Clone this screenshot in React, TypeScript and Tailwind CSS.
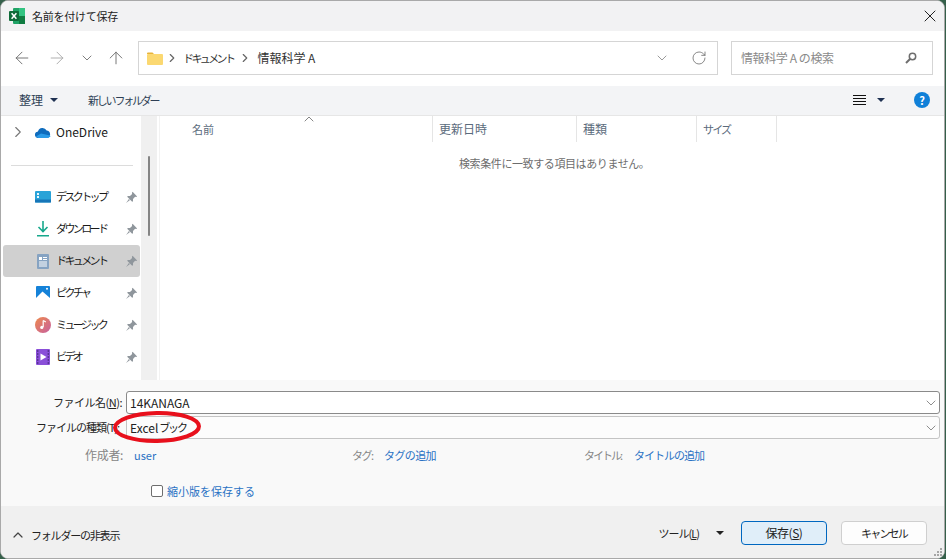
import { ArrowLeft, ArrowRight, ArrowUp, ChevronDown, ChevronRight, ChevronUp, RotateCw, X } from "lucide-react";

const font = { fontFamily: '"Noto Sans CJK JP", "Liberation Sans", sans-serif' };

function Pin() {
    return (
        <svg width="13" height="13" viewBox="0 0 12 12" className="shrink-0">
            <path d="M7 .8 11.2 5 10.3 5.6 9.3 5.4 7.4 7.4 7.4 9.4 6.6 10 2 5.4 2.6 4.6 4.6 4.6 6.6 2.7 6.4 1.7Z" fill="#8f969c" />
            <path d="M3.6 7.4 1 11 4.6 8.4Z" fill="#8f969c" />
        </svg>
    );
}

function DesktopIcon() {
    return (
        <svg width="16" height="12" viewBox="0 0 16 12">
            <rect width="16" height="11.5" rx="1" fill="#29a3d8" />
            <rect y="8.5" width="16" height="3" fill="#1676b8" />
            <rect x="2" y="2" width="2" height="2" fill="#e8f6fc" />
            <rect x="2" y="5" width="2" height="2" fill="#e8f6fc" />
        </svg>
    );
}

function DownloadIcon() {
    return (
        <svg width="14" height="16" viewBox="0 0 14 16" fill="none" stroke="#17a88c" strokeWidth="1.6">
            <path d="M7 0v10M2.5 6 7 10.5 11.5 6" />
            <path d="M1 14.8h12" />
        </svg>
    );
}

function DocIcon() {
    return (
        <svg width="12" height="15" viewBox="0 0 12 15">
            <rect width="12" height="15" rx="1" fill="#86a3c2" />
            <rect x="2" y="3" width="3" height="3" fill="#fff" />
            <path d="M6 3.5h4M6 5.5h4M2 8h8M2 10h8M2 12h8" stroke="#fff" strokeWidth="1" />
        </svg>
    );
}

function PictureIcon() {
    return (
        <svg width="14" height="14" viewBox="0 0 14 14">
            <rect width="14" height="14" rx="1" fill="#1582d8" />
            <path d="M0 12 6.5 5.5 14 12V14H0Z" fill="#fff" />
            <circle cx="11" cy="2.8" r="1" fill="#fff" />
        </svg>
    );
}

function MusicIcon() {
    return (
        <svg width="16" height="16" viewBox="0 0 16 16">
            <defs>
                <linearGradient id="mus" x1="0" y1="0" x2="1" y2="1">
                    <stop offset="0" stopColor="#ee8a4c" />
                    <stop offset="1" stopColor="#c760a0" />
                </linearGradient>
            </defs>
            <circle cx="8" cy="8" r="8" fill="url(#mus)" />
            <path d="M8.2 3.5V10" stroke="#fff" strokeWidth="1.2" />
            <path d="M8.2 3.5 10.8 5" stroke="#fff" strokeWidth="1.2" />
            <circle cx="6.8" cy="10.4" r="1.6" fill="#fff" />
        </svg>
    );
}

function VideoIcon() {
    return (
        <svg width="14" height="16" viewBox="0 0 14 16">
            <rect width="14" height="16" rx="1" fill="#8a4fd8" />
            <path d="M4.5 4.5 10.5 8 4.5 11.5Z" fill="#fff" />
            <path d="M1 2h1.4M1 5h1.4M1 8h1.4M1 11h1.4M1 14h1.4M11.6 2H13M11.6 5H13M11.6 8H13M11.6 11H13M11.6 14H13" stroke="#2b1a55" strokeWidth="1.2" />
        </svg>
    );
}

function SideItem({ icon, label, active }: { icon: React.ReactNode; label: string; active?: boolean }) {
    return (
        <div className={`flex h-[32px] items-center rounded-[3px] pl-[30px] pr-[2px] ${active ? "bg-[#d0d0d0]" : ""}`}>
            <span className="flex w-[20px] justify-center">{icon}</span>
            <span className="mb-[1px] ml-[3px] flex-1 whitespace-nowrap text-[11px] tracking-[-2.6px] text-[#1a1a1a]">{label}</span>
            <Pin />
        </div>
    );
}

function Col({ label, className }: { label: string; className: string }) {
    return (
        <div className={`flex h-[26px] items-center border-r border-[#e5e5e5] pl-[6px] text-[#5b6b7c] ${className}`}>
            {label}
        </div>
    );
}

function Meta({ label, value, className, labelClass, labelW, valueClass }: { label: string; value: string; className: string; labelClass: string; labelW: string; valueClass: string }) {
    return (
        <div className={`flex items-center ${className}`}>
            <span className={`whitespace-nowrap text-[#868686] ${labelW} ${labelClass}`}>{label}</span>
            <span className={`whitespace-nowrap text-[#2a72c4] ${valueClass}`}>{value}</span>
        </div>
    );
}

export default function App() {
    return (
        <div className="relative h-[559px] w-[946px] overflow-hidden bg-[#35604a]" style={font}>
            <div className="flex h-[559px] w-[945px] flex-col overflow-hidden rounded-[8px] border border-[#a9a9a9] bg-white">
                {/* title */}
                <div className="flex h-[30px] shrink-0 items-center bg-[#f2f2f3] pl-[8px] pr-[4px]">
                    <svg width="16" height="16" viewBox="0 0 16 16" className="shrink-0">
                        <rect x="4" y="0" width="12" height="16" rx="1" fill="#21a366" />
                        <rect x="10" y="0" width="6" height="8" fill="#33c481" />
                        <rect x="10" y="8" width="6" height="8" fill="#107c41" />
                        <rect x="0" y="3" width="10" height="10" rx="1" fill="#0e6b38" />
                        <path d="M2.6 5.2 7.4 10.8M7.4 5.2 2.6 10.8" stroke="#fff" strokeWidth="1.5" />
                    </svg>
                    <span className="ml-[7px] flex-1 text-[11px] tracking-[-0.25px] text-[#222]">名前を付けて保存</span>
                    <X size={20} strokeWidth={1.2} className="text-[#222]" />
                </div>

                {/* nav */}
                <div className="flex h-[55px] shrink-0 items-center bg-white pb-[1px] pl-[11px] pr-[11px]">
                    <ArrowLeft size={20} strokeWidth={1.1} className="text-[#6b6b6b]" />
                    <ArrowRight size={20} strokeWidth={1.1} className="ml-[15px] text-[#a8a8a8]" />
                    <ChevronDown size={16} strokeWidth={1.3} className="ml-[12px] text-[#6b6b6b]" />
                    <ArrowUp size={20} strokeWidth={1.1} className="ml-[11px] text-[#6b6b6b]" />
                    <div className="ml-[12px] flex h-[34px] w-[580px] items-center border border-[#d5d5d5] pl-[8px] pr-[10px]">
                        <svg width="16" height="13" viewBox="0 0 16 13" className="shrink-0">
                            <path d="M0 1.5A1 1 0 0 1 1 .5h4.5L7 2H0Z" fill="#e8b33a" />
                            <rect y="2" width="16" height="11" rx="1" fill="#fbd871" />
                        </svg>
                        <ChevronRight size={14} strokeWidth={2} className="ml-[2px] text-[#666]" />
                        <span className="ml-[4px] whitespace-nowrap text-[11px] tracking-[-2.6px] text-[#333]">ドキュメント</span>
                        <ChevronRight size={14} strokeWidth={2} className="ml-[5px] text-[#666]" />
                        <span className="ml-[5px] flex-1 text-[12px] text-[#333]">情報科学 A</span>
                        <ChevronDown size={16} strokeWidth={1} className="text-[#666]" />
                        <RotateCw size={16} strokeWidth={1.2} className="ml-[21px] text-[#6b6b6b]" />
                    </div>
                    <div className="ml-[13px] flex h-[34px] w-[202px] items-center border border-[#d5d5d5] pl-[9px] pr-[15px]">
                        <span className="flex-1 text-[12px] tracking-[-0.4px] text-[#8a8a8a]">情報科学 A の検索</span>
                        <svg width="12" height="12" viewBox="0 0 12 12" fill="none" stroke="#6e6e6e" strokeWidth="1.5" className="shrink-0">
                            <circle cx="7.5" cy="4.5" r="3.2" />
                            <path d="M5 7 1 11" strokeWidth="2" />
                        </svg>
                    </div>
                </div>

                {/* toolbar */}
                <div className="flex h-[30px] shrink-0 items-center border-b border-[#e6e6e6] bg-[#f3f4f6] pb-[1px] pl-[18px] pr-[14px]">
                    <span className="text-[12px] text-[#2e3f55]">整理</span>
                    <span className="ml-[7px] h-0 w-0 border-x-[4px] border-t-[4px] border-x-transparent border-t-[#1f3152]" />
                    <span className="ml-[30px] flex-1 text-[11px] tracking-[-2.2px] text-[#2e3f55]">新しいフォルダー</span>
                    <span className="flex flex-col gap-[2px]">
                        <span className="h-[1px] w-[13px] bg-[#111]" />
                        <span className="h-[1px] w-[13px] bg-[#111]" />
                        <span className="h-[1px] w-[13px] bg-[#111]" />
                        <span className="h-[1px] w-[13px] bg-[#111]" />
                    </span>
                    <span className="ml-[11px] h-0 w-0 border-x-[4px] border-t-[4px] border-x-transparent border-t-[#1f3152]" />
                    <span className="ml-[29px] flex h-[16px] w-[16px] items-center justify-center rounded-full bg-[#1080d8] text-[11px] font-bold text-white">?</span>
                </div>

                {/* body */}
                <div className="flex min-h-0 flex-1 bg-white">
                    <div className="flex w-[140px] shrink-0 flex-col pl-[2px] pr-[1px]">
                        <div className="flex h-[32px] items-center pl-[6px]">
                            <ChevronRight size={18} strokeWidth={1.5} className="text-[#777]" />
                            <svg width="16" height="11" viewBox="0 0 16 11" className="ml-[8px] shrink-0">
                                <path d="M3.5 11A3.3 3.3 0 0 1 3 4.4 4.6 4.6 0 0 1 11.6 3.6 3.8 3.8 0 0 1 12.5 11Z" fill="#0f6cbd" />
                                <path d="M1 9.5 6 6.5 15 8.5 15.5 9.5 13 11H3.5Z" fill="#2b9be8" />
                            </svg>
                            <span className="ml-[5px] text-[12px] text-[#1a1a1a]">OneDrive</span>
                        </div>
                        <div className="ml-[8px] mr-[7px] mt-[17px] h-px bg-[#dcdcdc]" />
                        <div className="mt-[15px] flex flex-col">
                            <SideItem icon={<DesktopIcon />} label="デスクトップ" />
                            <SideItem icon={<DownloadIcon />} label="ダウンロード" />
                            <SideItem icon={<DocIcon />} label="ドキュメント" active />
                            <SideItem icon={<PictureIcon />} label="ピクチャ" />
                            <SideItem icon={<MusicIcon />} label="ミュージック" />
                            <SideItem icon={<VideoIcon />} label="ビデオ" />
                        </div>
                    </div>
                    <div className="flex w-[16px] shrink-0 justify-center bg-[#f0f0f0] pt-[40px]">
                        <div className="h-[80px] w-[2px] rounded-full bg-[#858585]" />
                    </div>
                    <div className="ml-[2px] flex-1 border-l border-[#f2f2f2]">
                        <div className="relative flex">
                            <ChevronUp size={16} strokeWidth={1.2} className="absolute left-[141px] top-[-5px] text-[#666]" />
                            <Col label="名前" className="w-[273px] pl-[32px] text-[11px]" />
                            <Col label="更新日時" className="w-[144px] text-[12px]" />
                            <Col label="種類" className="w-[120px] text-[12px]" />
                            <Col label="サイズ" className="w-[80px] text-[11px] tracking-[-1.8px]" />
                        </div>
                        <div className="mt-[13px] pl-[299px] text-[11px] tracking-[-0.4px] text-[#6d6d6d]">検索条件に一致する項目はありません。</div>
                    </div>
                </div>

                {/* form */}
                <div className="flex h-[126px] shrink-0 flex-col bg-[#f9f9f9] pl-[5px] pr-[4px] pt-[11px]">
                    <div className="flex items-center">
                        <span className="w-[120px] whitespace-nowrap pr-[4px] text-right text-[11px] tracking-[-0.5px] text-[#222]">
                            ファイル名(<span className="underline">N</span>):
                        </span>
                        <div className="relative flex h-[23px] flex-1 items-center rounded-[3px] border border-[#8a8a8a] bg-white pl-[3px] text-[12px] text-[#222]">
                            14KANAGA
                            <ChevronDown size={16} strokeWidth={1} className="absolute right-0 text-[#555]" />
                        </div>
                    </div>
                    <div className="mt-[2px] flex items-center">
                        <span className="w-[120px] whitespace-nowrap pl-[30px] text-[11px] tracking-[-1px] text-[#222]">ファイルの種類(T):</span>
                        <div className="relative flex h-[23px] flex-1 items-center rounded-[3px] border border-[#c4c4c4] bg-[#fcfcfc] pl-[3px] text-[12px] text-[#222]">
                            Excel <span className="ml-[1px] text-[11px] tracking-[-2.2px]">ブック</span>
                            <ChevronDown size={16} strokeWidth={1} className="absolute right-0 text-[#555]" />
                        </div>
                    </div>
                    <div className="mt-[7px] flex h-[18px]">
                        <Meta label="作成者:" value="user" className="ml-[79px] w-[267px] text-[12px]" labelClass="tracking-[-0.3px]" labelW="w-[49px]" valueClass="text-[11px]" />
                        <Meta label="タグ:" value="タグの追加" className="w-[232px] text-[11px]" labelClass="tracking-[-1.5px]" labelW="w-[32px]" valueClass="tracking-[-0.6px]" />
                        <Meta label="タイトル:" value="タイトルの追加" className="text-[11px]" labelClass="tracking-[-2px]" labelW="w-[50px]" valueClass="tracking-[-1px]" />
                    </div>
                    <div className="ml-[145px] mt-[18px] flex h-[18px] items-center">
                        <span className="h-[12px] w-[12px] rounded-[2px] border border-[#6e6e6e] bg-white" />
                        <span className="ml-[4px] text-[11px] text-[#2a72c4]">縮小版を保存する</span>
                    </div>
                </div>

                {/* footer */}
                <div className="relative flex h-[52px] shrink-0 items-start bg-[#f0f0f0] pl-[9px] pr-[17px]">
                    <div className="mt-[20px] flex h-[18px] flex-1 items-center">
                        <ChevronUp size={16} strokeWidth={1.8} className="text-[#444]" />
                        <span className="ml-[5px] text-[11px] tracking-[-1.2px] text-[#222]">フォルダーの非表示</span>
                    </div>
                    <div className="mt-[15px] flex items-center">
                        <span className="text-[11px] tracking-[-1px] text-[#222]">
                            ツール(<span className="underline">L</span>)
                        </span>
                        <span className="ml-[17px] h-0 w-0 border-x-[4px] border-t-[4px] border-x-transparent border-t-[#222]" />
                        <button className="ml-[17px] h-[24px] w-[86px] rounded-[4px] border border-[#0067c0] bg-[#e0eef9] text-[12px] tracking-[-0.5px] text-[#222]">
                            保存(<span className="underline">S</span>)
                        </button>
                        <button className="ml-[14px] h-[24px] w-[86px] rounded-[4px] border border-[#cfcfcf] bg-[#fdfdfd] text-[11px] tracking-[-1.8px] text-[#222]">キャンセル</button>
                    </div>
                    <svg width="8" height="8" viewBox="0 0 8 8" className="absolute bottom-[2px] right-[2px]" fill="#a6a6a6">
                        <rect x="6" y="0" width="2" height="2" />
                        <rect x="3" y="3" width="2" height="2" />
                        <rect x="6" y="3" width="2" height="2" />
                        <rect x="0" y="6" width="2" height="2" />
                        <rect x="3" y="6" width="2" height="2" />
                        <rect x="6" y="6" width="2" height="2" />
                    </svg>
                </div>
            </div>

            {/* hand drawn circle on the screenshot */}
            <svg width="94" height="38" viewBox="0 0 94 38" fill="none" className="absolute left-[110px] top-[408px]">
                <ellipse cx="47" cy="19" rx="42" ry="14" stroke="#e8101c" strokeWidth="4" transform="rotate(-1 47 19)" />
            </svg>
        </div>
    );
}
